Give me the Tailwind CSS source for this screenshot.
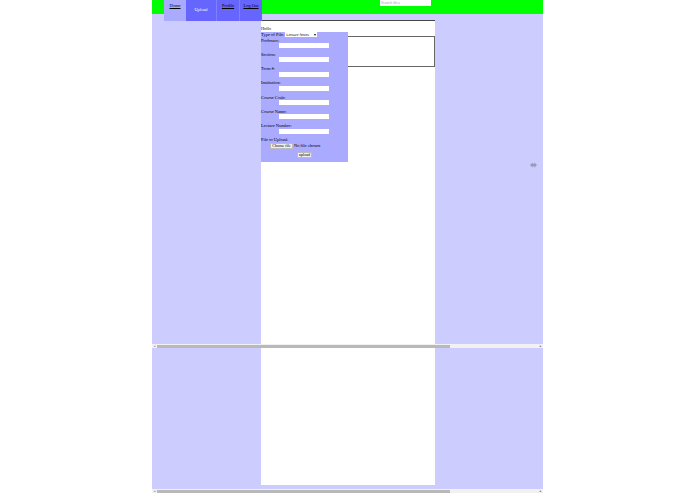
<!DOCTYPE html>
<html lang="en">
<head>
  <meta charset="UTF-8">
  <title>Upload</title>
  <script src="https://cdn.jsdelivr.net/npm/@tailwindcss/browser@4"></script>
</head>
<body class="bg-white font-['Liberation_Serif',serif] text-[4.5px] leading-[6px] text-black [text-rendering:geometricPrecision] overflow-hidden">
  <div class="w-[391px] ml-[152px] h-[494px] flex flex-col relative">

    <!-- header -->
    <div class="h-[14px] shrink-0 bg-[#00ff00] flex relative z-10">
      <div class="ml-[12px] flex h-[21px] w-[98px]">
        <a class="w-[22px] h-full bg-[#aaaaff] text-center pt-[2.5px] underline decoration-[0.5px]">Home</a>
        <a class="w-[30px] h-full bg-[#6666ff] text-white text-center pt-[6.5px]">Upload</a>
        <a class="w-[23px] h-full bg-[#6666ff] border-l border-[#8080ff] text-center pt-[2.5px] underline decoration-[0.5px]">Profile</a>
        <a class="w-[23px] h-full bg-[#6666ff] border-l border-[#8080ff] text-center pt-[2.5px] underline decoration-[0.5px]">Log Out</a>
      </div>
      <input class="ml-[118px] w-[51px] h-[6px] bg-white px-[1px] text-[4px] leading-[6px] placeholder:text-gray-400" placeholder="Search files">
    </div>

    <!-- first frame -->
    <div class="h-[330px] shrink-0 bg-[#ccccff] flex">
      <div class="w-[109px] shrink-0"></div>
      <div class="w-[174px] shrink-0 mt-[6px] bg-white border-t-[1.5px] border-[#444444] relative">
        <p class="pt-[5px] h-[14.5px]">Hello</p>
        <div class="h-[31px] border border-l-0 border-[#666666]"></div>

        <form class="absolute left-0 top-[10.5px] w-[87px] h-[130px] bg-[#aaaaff] flex flex-col">
          <div class="flex items-center h-[6px]">
            <span>Type of File:</span>
            <div class="ml-[1px] w-[32px] h-[5px] bg-white text-[4px] leading-[5px] pl-[1px] flex justify-between items-center">
              <span>Lecture Notes</span>
              <span class="mr-[1px] border-x-[1.5px] border-t-[2px] border-x-transparent border-t-black"></span>
            </div>
          </div>
          <label class="h-[14.3px]">Professor:<input class="block ml-[18px] w-[50px] h-[5px] bg-white -mt-[0.5px]"></label>
          <label class="h-[14.3px]">Section:<input class="block ml-[18px] w-[50px] h-[5px] bg-white -mt-[0.5px]"></label>
          <label class="h-[14.3px]">Term #:<input class="block ml-[18px] w-[50px] h-[5px] bg-white -mt-[0.5px]"></label>
          <label class="h-[14.3px]">Institution:<input class="block ml-[18px] w-[50px] h-[5px] bg-white -mt-[0.5px]"></label>
          <label class="h-[14.3px]">Course Code:<input class="block ml-[18px] w-[50px] h-[5px] bg-white -mt-[0.5px]"></label>
          <label class="h-[14.3px]">Course Name:<input class="block ml-[18px] w-[50px] h-[5px] bg-white -mt-[0.5px]"></label>
          <label class="h-[14.3px]">Lecture Number:<input class="block ml-[18px] w-[50px] h-[5px] bg-white -mt-[0.5px]"></label>
          <span class="-mt-[0.5px]">File to Upload:</span>
          <div class="flex items-center ml-[9px]">
            <button type="button" class="w-[23px] h-[6px] bg-[#eeeeee] border-[0.5px] border-[#bbbbbb] text-[4px] leading-[4px] text-center">Choose file</button>
            <span class="ml-[1px]">No file chosen</span>
          </div>
          <button type="button" class="self-center mt-[3px] w-[15px] h-[6px] bg-[#eeeeee] border-[0.5px] border-[#bbbbbb] text-[4px] leading-[4px]">upload</button>
        </form>

        <!-- little arrow sitting in the right column -->
        <svg class="absolute left-[269px] top-[141px]" width="7" height="6" viewBox="0 0 8 6"><path d="M0 3 3 0v1.5h2V0l3 3-3 3V4.5H3V6z" fill="#9a9ab8"/></svg>
      </div>
      <div class="flex-1"></div>
    </div>

    <!-- scrollbar -->
    <div class="h-[4px] shrink-0 bg-[#f1f1f1] flex items-center">
      <span class="w-[5px] text-center text-[3px] leading-[4px] text-gray-500">◂</span>
      <div class="w-[293px] h-[3px] bg-[#b9b9b9]"></div>
      <span class="ml-auto w-[5px] text-center text-[3px] leading-[4px] text-gray-700">▸</span>
    </div>

    <!-- second frame -->
    <div class="h-[141px] shrink-0 bg-[#ccccff] flex">
      <div class="w-[109px] shrink-0"></div>
      <div class="w-[174px] shrink-0 h-[137px] bg-white"></div>
    </div>

    <!-- scrollbar -->
    <div class="h-[4px] shrink-0 bg-[#f1f1f1] flex items-center">
      <span class="w-[5px] text-center text-[3px] leading-[4px] text-gray-500">◂</span>
      <div class="w-[293px] h-[3px] bg-[#b9b9b9]"></div>
      <span class="ml-auto w-[5px] text-center text-[3px] leading-[4px] text-gray-700">▸</span>
    </div>
  </div>
</body>
</html>
